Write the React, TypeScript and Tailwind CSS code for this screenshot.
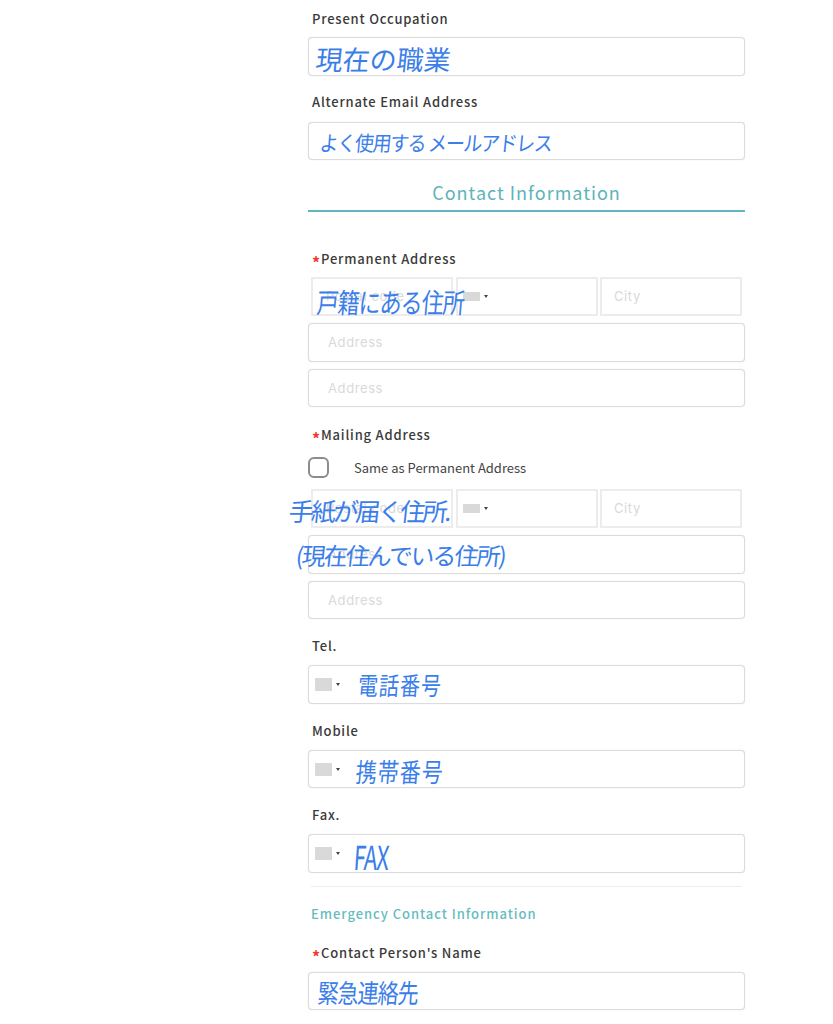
import type { ReactNode } from 'react';

const jp = 'font-["Noto_Sans_CJK_JP",sans-serif]';
const hand = 'absolute whitespace-nowrap font-["Noto_Sans_CJK_JP",sans-serif] font-normal text-[#3b7eea] leading-none -skew-x-6';

function Label({ children, required, className = '' }: { children: ReactNode; required?: boolean; className?: string }) {
  return (
    <div className={`flex h-5 items-center pl-1 pt-px text-[13px] font-medium tracking-[0.8px] text-[#3a3a3a] ${jp} ${className}`}>
      {required && <span className="w-[9px] translate-y-[3px] text-[16px] font-bold leading-none tracking-normal text-[#f5372a]">*</span>}
      {children}
    </div>
  );
}

function Box({ children, className = '' }: { children?: ReactNode; className?: string }) {
  return (
    <div className={`relative flex h-[38.5px] items-center rounded-[4px] border border-[#dcdcdc] bg-white shadow-[0_0_1px_#d8d8d8] ${className}`}>
      {children}
    </div>
  );
}

function Placeholder({ text }: { text: string }) {
  return <span className='pt-px font-["Inter",sans-serif] text-[13px] tracking-[0.6px] text-[#d9d9d9]'>{text}</span>;
}

function Flag() {
  return (
    <div className="flex items-center pl-[6px] pt-px">
      <div className="h-[13px] w-[17px] bg-[#d9d9d9]" />
      <div className="ml-[4px] h-0 w-0 border-x-[2.5px] border-t-[3px] border-x-transparent border-t-[#444]" />
    </div>
  );
}

function AddressBlock() {
  return (
    <div className="flex flex-col">
      <div className="mx-[3px] grid h-[39px] grid-cols-3 gap-[2.5px]">
        <div className="flex items-center border-2 border-[#ececec] pl-[13px]">
          <Placeholder text="Postal code" />
        </div>
        <div className="flex items-center border-2 border-[#ececec] pl-[5px]">
          <div className="h-[9px] w-[17px] bg-[#d9d9d9]" />
          <div className="ml-[4px] h-0 w-0 border-x-[2.5px] border-t-[3px] border-x-transparent border-t-[#444]" />
        </div>
        <div className="flex items-center border-2 border-[#ececec] pl-[12px]">
          <Placeholder text="City" />
        </div>
      </div>
      <Box className="mt-[7px] pl-[19px]">
        <Placeholder text="Address" />
      </Box>
      <Box className="mt-[7px] pl-[19px]">
        <Placeholder text="Address" />
      </Box>
    </div>
  );
}

export default function App() {
  return (
    <div className="relative h-[1024px] overflow-hidden bg-white">
      <div className="ml-[308px] flex w-[437px] flex-col pt-2">
        {/* Occupation / email */}
        <Label>Present Occupation</Label>
        <Box className="mt-[9px]" />
        <Label className="mt-[16px]">Alternate Email Address</Label>
        <Box className="mt-[10px]" />

        {/* Contact */}
        <div className={`mt-[20px] border-b-2 border-[#62b6c4] pb-[6px] text-center text-[18px] font-normal leading-[24px] tracking-[1px] text-[#5cb4b9] ${jp}`}>
          Contact Information
        </div>

        <Label required className="mt-[36px]">Permanent Address</Label>
        <div className="mt-[9px]">
          <AddressBlock />
        </div>

        <Label required className="mt-[17px]">Mailing Address</Label>
        <div className="mt-[13px] flex h-[21px] items-center">
          <div className="h-[21px] w-[21px] rounded-[6px] border-2 border-[#8c8c8c]" />
          <span className={`ml-[25px] text-[13px] text-[#444] ${jp}`}>Same as Permanent Address</span>
        </div>
        <div className="mt-[11px]">
          <AddressBlock />
        </div>

        <Label className="mt-[16.5px]">Tel.</Label>
        <Box className="mt-[9.5px]"><Flag /></Box>
        <Label className="mt-[17px]">Mobile</Label>
        <Box className="mt-[9px]"><Flag /></Box>
        <Label className="mt-[16.5px]">Fax.</Label>
        <Box className="mt-[9.5px]"><Flag /></Box>

        <div className="mx-[3px] mt-[13px] border-t border-[#eeeeee]" />
        <div className={`mt-[17px] flex h-5 items-center pl-[3px] pt-px text-[13px] font-medium tracking-[0.95px] text-[#66bcc0] ${jp}`}>
          Emergency Contact Information
        </div>
        <Label required className="mt-[19px]">Contact Person's Name</Label>
        <Box className="mt-[9px]" />
      </div>

      {/* handwritten notes over the form */}
      <span className={`${hand} left-[316px] top-[45px] text-[27px]`}>現在の職業</span>
      <span className={`${hand} left-[320px] top-[132px] text-[19px] tracking-[-1.4px] scale-y-110`}>よく使用する メールアドレス</span>
      <span className={`${hand} left-[317px] top-[289px] text-[22px] tracking-[-1px] scale-y-125`}>戸籍にある住所</span>
      <span className={`${hand} left-[289px] top-[498px] text-[25px] tracking-[-2.7px]`}>手紙が届く住所.</span>
      <span className={`${hand} left-[296px] top-[543px] text-[24px] tracking-[-2px]`}>(現在住んでいる住所)</span>
      <span className={`${hand} left-[358px] top-[675px] text-[20px] tracking-[1px] scale-y-125`}>電話番号</span>
      <span className={`${hand} left-[356px] top-[761px] text-[21px] tracking-[1px] scale-y-125`}>携帯番号</span>
      <span className={`${hand} left-[354px] top-[844px] text-[22px] tracking-[-1px] scale-y-150`}>FAX</span>
      <span className={`${hand} left-[318px] top-[982px] text-[21px] tracking-[-1px] scale-y-125`}>緊急連絡先</span>
    </div>
  );
}
